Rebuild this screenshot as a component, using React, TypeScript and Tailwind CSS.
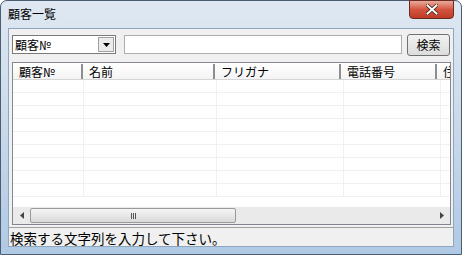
import React from "react";

const font = { fontFamily: '"Noto Sans CJK JP", "Noto Sans", sans-serif' };

function Arrow({ dir }: { dir: "left" | "right" | "down" }) {
  if (dir === "down")
    return (
      <svg width="7" height="4" viewBox="0 0 7 4">
        <path d="M0 0H7L3.5 4Z" fill="#000" />
      </svg>
    );
  return (
    <svg width="4" height="7" viewBox="0 0 4 7">
      {dir === "left" ? <path d="M4 0V7L0 3.5Z" fill="#444" /> : <path d="M0 0V7L4 3.5Z" fill="#444" />}
    </svg>
  );
}

const cols = [
  { w: 70, t: "顧客№" },
  { w: 132, t: "名前" },
  { w: 126, t: "フリガナ" },
  { w: 96, t: "電話番号" },
  { w: 40, t: "住所" },
];

export default function App() {
  return (
    <div className="w-[462px] h-[255px] overflow-hidden bg-white" style={font}>
      <div className="w-[462px] h-[255px] rounded-t-[7px] border border-[#4b5d73] bg-gradient-to-b from-[#dfe8f2] via-[#c9d9ea] to-[#b0c9e4] flex flex-col">
        {/* title bar */}
        <div className="h-[28px] flex items-start relative">
          <div className="pl-[7px] pt-[5px] text-[12px] leading-[16px] text-black">顧客一覧</div>
          <div className="absolute right-[7px] top-[-1px] w-[45px] h-[19px] rounded-b-[4px] border border-[#6b2b23] bg-gradient-to-b from-[#e9a99a] via-[#d25440] to-[#c03a26] flex items-center justify-center">
            <svg width="12" height="11" viewBox="0 0 12 11">
              <path d="M1.5 1.5L10.5 9.5M10.5 1.5L1.5 9.5" stroke="#3a1a14" strokeWidth="3.4" strokeLinecap="square" />
              <path d="M1.5 1.5L10.5 9.5M10.5 1.5L1.5 9.5" stroke="#fff" strokeWidth="2" strokeLinecap="square" />
            </svg>
          </div>
        </div>
        {/* client */}
        <div className="mx-[7px] flex-1 mb-[7px] border border-[#8fa6bf] bg-[#f0f0f0] flex flex-col text-[12px] leading-[14px] text-black">
          <div className="flex items-center pt-[5px] pl-[3px] pr-[3px] h-[26px]">
            <div className="w-[104px] h-[19px] border border-[#7a7a7a] bg-white flex items-center justify-between">
              <span className="pl-[2px]">顧客№</span>
              <div className="w-[16px] h-[15px] mr-[1px] border border-[#a0a0a0] bg-[#ececec] flex items-center justify-center">
                <Arrow dir="down" />
              </div>
            </div>
            <div className="ml-[8px] w-[278px] h-[19px] border border-[#abadb3] bg-white" />
            <div className="ml-[5px] w-[43px] h-[22px] border border-[#707070] rounded-[3px] bg-gradient-to-b from-[#f2f2f2] to-[#dcdcdc] flex items-center justify-center">
              検索
            </div>
          </div>
          {/* list view */}
          <div className="mt-[7px] ml-[3px] w-[439px] h-[163px] border border-[#828790] bg-white flex flex-col overflow-hidden">
            <div className="flex h-[17px] bg-white border-b border-[#d5d5d5] overflow-hidden">
              <div className="flex border-t border-[#ffffff]">
                {cols.map((c, i) => (
                  <div
                    key={i}
                    className="shrink-0 h-[16px] border-r-2 border-[#8e8e8e] bg-gradient-to-b from-[#ffffff] to-[#f3f3f3] pl-[6px] leading-[16px] whitespace-nowrap overflow-hidden"
                    style={{ width: c.w }}
                  >
                    {c.t}
                  </div>
                ))}
              </div>
            </div>
            <div className="flex-1 relative flex flex-col">
              {[0, 1, 2, 3, 4, 5, 6, 7, 8].map((r) => (
                <div key={r} className="flex h-[13px] border-b border-[#f0f0f0] shrink-0">
                  {cols.map((c, i) => (
                    <div key={i} className="shrink-0 border-r border-[#f0f0f0]" style={{ width: c.w + 1 }} />
                  ))}
                </div>
              ))}
            </div>
            {/* h scrollbar */}
            <div className="h-[17px] bg-[#eaeaea] flex items-center shrink-0">
              <div className="w-[17px] h-[17px] flex items-center justify-center">
                <Arrow dir="left" />
              </div>
              <div className="w-[206px] h-[15px] rounded-[2px] border border-[#9a9a9a] bg-gradient-to-b from-[#f5f5f5] to-[#d9d9d9] flex items-center justify-center">
                <div className="flex gap-[1px]">
                  <div className="w-[1px] h-[6px] bg-[#555]" />
                  <div className="w-[1px] h-[6px] bg-[#555]" />
                  <div className="w-[1px] h-[6px] bg-[#555]" />
                </div>
              </div>
              <div className="flex-1" />
              <div className="w-[17px] h-[17px] flex items-center justify-center">
                <Arrow dir="right" />
              </div>
            </div>
          </div>
          {/* status bar */}
          <div className="mt-[2px] border-t border-[#a0a0a0] flex-1 flex items-start pt-[2px] pl-[1px]">
            <span className="text-[13.5px] leading-[16px]">検索する文字列を入力して下さい。</span>
          </div>
        </div>
      </div>
    </div>
  );
}
